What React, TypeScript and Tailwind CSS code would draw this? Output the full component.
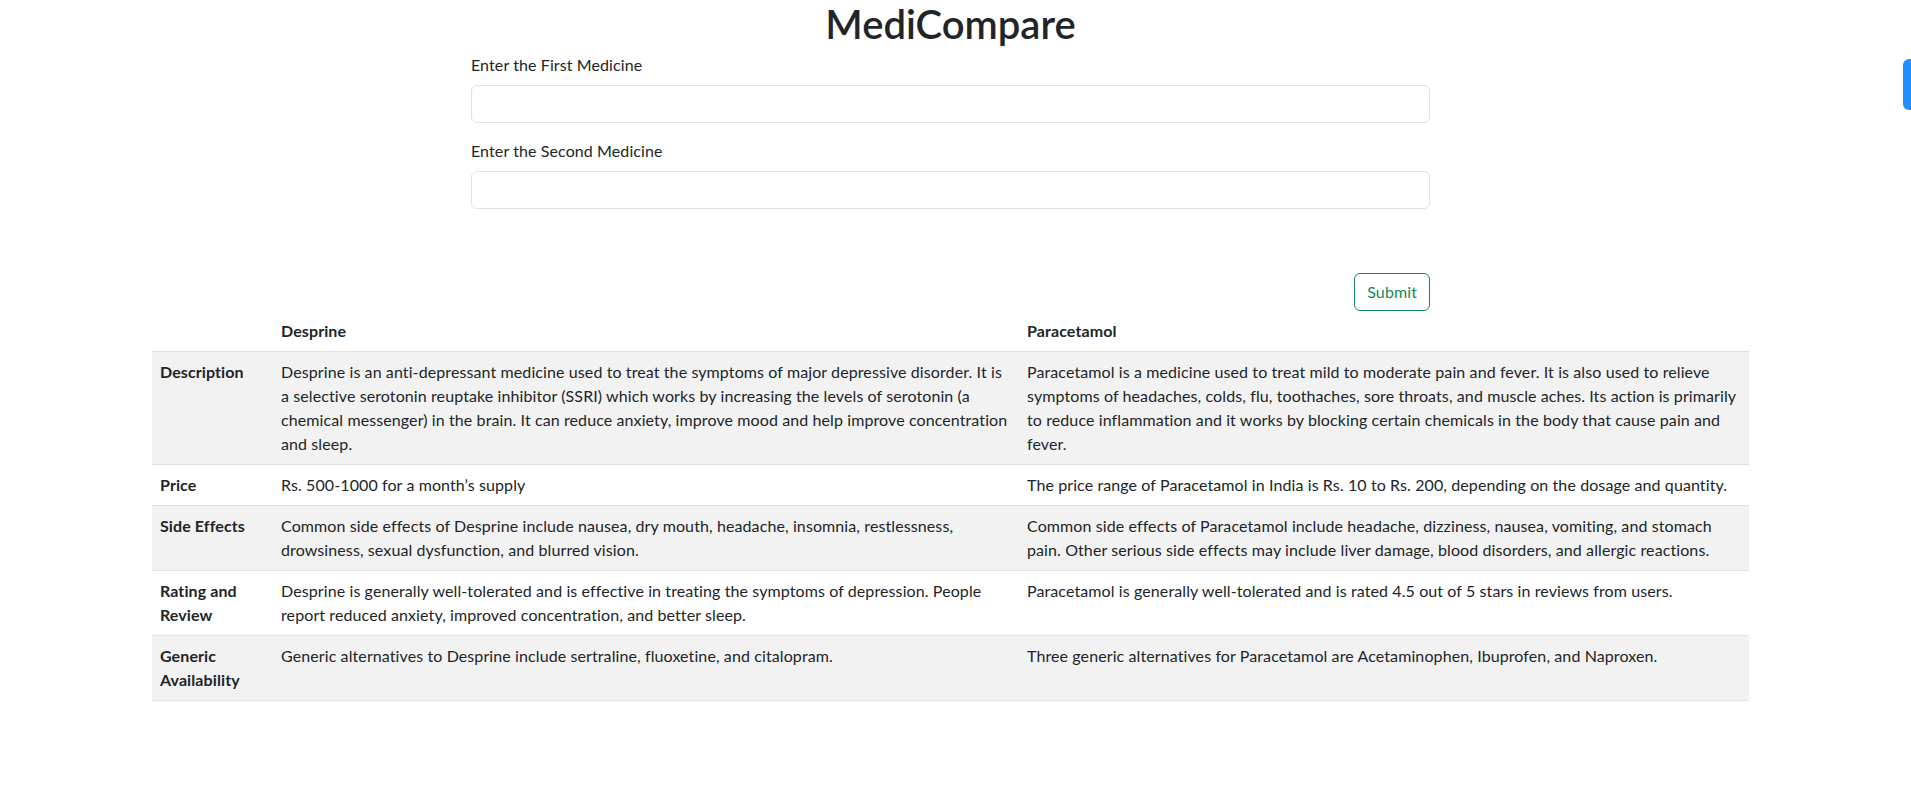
import React from "react";

const rows = [
  {
    label: "Description",
    a: "Desprine is an anti-depressant medicine used to treat the symptoms of major depressive disorder. It is a selective serotonin reuptake inhibitor (SSRI) which works by increasing the levels of serotonin (a chemical messenger) in the brain. It can reduce anxiety, improve mood and help improve concentration and sleep.",
    b: "Paracetamol is a medicine used to treat mild to moderate pain and fever. It is also used to relieve symptoms of headaches, colds, flu, toothaches, sore throats, and muscle aches. Its action is primarily to reduce inflammation and it works by blocking certain chemicals in the body that cause pain and fever.",
  },
  {
    label: "Price",
    a: "Rs. 500-1000 for a month’s supply",
    b: "The price range of Paracetamol in India is Rs. 10 to Rs. 200, depending on the dosage and quantity.",
  },
  {
    label: "Side Effects",
    a: "Common side effects of Desprine include nausea, dry mouth, headache, insomnia, restlessness, drowsiness, sexual dysfunction, and blurred vision.",
    b: "Common side effects of Paracetamol include headache, dizziness, nausea, vomiting, and stomach pain. Other serious side effects may include liver damage, blood disorders, and allergic reactions.",
  },
  {
    label: "Rating and Review",
    a: "Desprine is generally well-tolerated and is effective in treating the symptoms of depression. People report reduced anxiety, improved concentration, and better sleep.",
    b: "Paracetamol is generally well-tolerated and is rated 4.5 out of 5 stars in reviews from users.",
  },
  {
    label: "Generic Availability",
    a: "Generic alternatives to Desprine include sertraline, fluoxetine, and citalopram.",
    b: "Three generic alternatives for Paracetamol are Acetaminophen, Ibuprofen, and Naproxen.",
  },
];

export default function App() {
  return (
    <div
      className="min-h-screen w-[1901px] bg-white text-[16px] leading-[1.5] tracking-[0.1px] text-[#212529]"
      style={{ fontFamily: "Lato, 'Noto Sans', sans-serif" }}
    >
      <h1 className="text-center text-[40px] font-semibold leading-[1.2] tracking-normal">MediCompare</h1>

      <form className="mx-auto mt-[5px] w-[959px]" onSubmit={(e) => e.preventDefault()}>
        <div className="mb-4">
          <label className="mb-2 block">Enter the First Medicine</label>
          <input
            type="text"
            className="block h-[38px] w-full rounded-md border border-[#dee2e6] px-3 outline-none"
          />
        </div>
        <div>
          <label className="mb-2 block">Enter the Second Medicine</label>
          <input
            type="text"
            className="block h-[38px] w-full rounded-md border border-[#dee2e6] px-3 outline-none"
          />
        </div>
        <div className="mt-[64px] flex justify-end">
          <button
            type="submit"
            className="h-[38px] rounded-md border border-[#198754] px-3 font-normal text-[#198754]"
          >
            Submit
          </button>
        </div>
      </form>

      <table className="mx-auto w-[1597px] table-fixed border-collapse">
        <colgroup>
          <col className="w-[121px]" />
          <col className="w-[746px]" />
          <col className="w-[730px]" />
        </colgroup>
        <thead>
          <tr className="border-b border-[#dee2e6]">
            <th className="p-2 text-left align-top"></th>
            <th className="p-2 text-left align-top font-bold">Desprine</th>
            <th className="p-2 text-left align-top font-bold">Paracetamol</th>
          </tr>
        </thead>
        <tbody>
          {rows.map((r, i) => (
            <tr
              key={r.label}
              className={
                "border-b border-[#dee2e6] " + (i % 2 === 0 ? "bg-[#f2f2f2]" : "bg-white")
              }
            >
              <th className="p-2 text-left align-top font-bold">{r.label}</th>
              <td className="p-2 align-top">{r.a}</td>
              <td className="p-2 align-top">{r.b}</td>
            </tr>
          ))}
        </tbody>
      </table>

      {/* floating widget on the right edge */}
      <div className="fixed right-0 top-[59px] h-[51px] w-[8px] rounded-l-md bg-[#1e90ff]"></div>
    </div>
  );
}
